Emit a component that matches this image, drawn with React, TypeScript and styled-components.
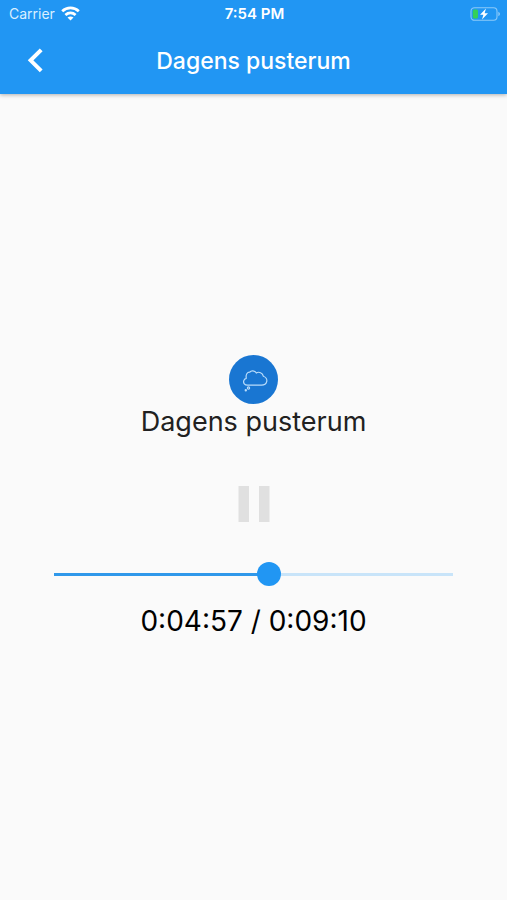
import { useState } from "react";
import type { CSSProperties } from "react";
import styled, { createGlobalStyle } from "styled-components";

const GlobalStyle = createGlobalStyle`
  * {
    box-sizing: border-box;
  }
  body {
    margin: 0;
    background: #fafafa;
    font-family: Inter, Roboto, sans-serif;
  }
`;

const Screen = styled.div`
  display: flex;
  flex-direction: column;
  min-height: 100vh;
`;

const Header = styled.header`
  background: #2196f3;
  color: #ffffff;
  box-shadow: 0 1px 4px rgba(0, 0, 0, 0.3);
`;

const StatusBar = styled.div`
  display: grid;
  grid-template-columns: 1fr auto 1fr;
  align-items: center;
  height: 27px;
  padding: 0 7px 0 9px;
  font-size: 14px;
  line-height: 20px;
`;

const Carrier = styled.div`
  display: flex;
  align-items: center;
  gap: 6px;
  color: #d9efff;
`;

const Clock = styled.div`
  font-size: 15px;
  font-weight: 600;
`;

const Battery = styled.div`
  display: flex;
  justify-content: flex-end;
`;

const AppBar = styled.div`
  display: grid;
  grid-template-columns: 72px 1fr 72px;
  align-items: center;
  height: 67px;
`;

const IconButton = styled.button<{ $size: number }>`
  display: flex;
  align-items: center;
  justify-content: center;
  width: ${({ $size }) => $size}px;
  height: ${({ $size }) => $size}px;
  padding: 0;
  border: 0;
  background: none;
  color: inherit;
  cursor: pointer;
  justify-self: center;
`;

const BarTitle = styled.h1`
  margin: 0;
  font-size: 23px;
  line-height: 32px;
  font-weight: 500;
  text-align: center;
`;

const Player = styled.main`
  flex: 1;
  display: flex;
  flex-direction: column;
  align-items: center;
  justify-content: center;
`;

const TrackTitle = styled.h2`
  margin: 0 0 32px;
  color: #212121;
  font-size: 27px;
  line-height: 36px;
  font-weight: 400;
`;

const SliderRow = styled.div`
  align-self: stretch;
  margin: 14px 0 5px;
  padding: 0 42px;
`;

const Slider = styled.input`
  appearance: none;
  display: block;
  width: 100%;
  height: 48px;
  margin: 0;
  cursor: pointer;
  background: linear-gradient(to right, #2f98ea var(--played), #c8e4f9 var(--played)) center / calc(100% - 24px) 3px
    no-repeat;

  &::-webkit-slider-thumb {
    appearance: none;
    width: 24px;
    height: 24px;
    border-radius: 50%;
    background: #2196f3;
  }
`;

const Time = styled.p`
  margin: 0;
  color: #000000;
  font-size: 28px;
  line-height: 36px;
`;

const WifiIcon = () => (
  <svg width="19" height="15" viewBox="0 0 19 15" fill="none" stroke="#ffffff" strokeWidth="2.8" aria-hidden="true">
    <path d="M1.200 5.200C6 .8 13 .8 17.800 5.200" />
    <path d="M4.400 9C7.500 6.200 11.500 6.200 14.600 9" />
    <path d="M9.500 14.600 6.500 11.600Q9.500 9.200 12.500 11.600Z" fill="#ffffff" stroke="none" />
  </svg>
);

const BatteryIcon = () => (
  <svg width="30" height="14" viewBox="0 0 30 14" aria-hidden="true">
    <rect x="1" y="0.700" width="26" height="12.600" rx="3.500" fill="none" stroke="#8ccaf9" strokeWidth="1.100" />
    <path d="M28.300 4.800Q30 5.600 30 7T28.300 9.200Z" fill="#8ccaf9" />
    <rect x="2.800" y="2.500" width="5.200" height="9" rx="1.500" fill="#34d058" />
    <path d="M16 1.400 10 7.700H13.400L12 12.600 18 6.300H14.600Z" fill="#ffffff" />
  </svg>
);

const BackIcon = () => (
  <svg width="18" height="26" viewBox="0 0 18 26" fill="none" stroke="currentColor" strokeWidth="4" aria-hidden="true">
    <path d="M14.200 1.800 3.600 12.300 14.200 22.800" />
  </svg>
);

const ThoughtLogo = () => (
  <svg width="49" height="49" viewBox="0 0 49 49" aria-hidden="true">
    <circle cx="24.500" cy="24.500" r="24.500" fill="#1976d2" />
    <g fill="none" stroke="#b9dcfa" strokeWidth="1.200" strokeLinejoin="round">
      <path d="M18.500 30.200C15.500 30 14.200 28 14.700 26C15 24.500 16 23.600 17.300 23.300C16.500 19.500 18.300 17 20.800 17.200C22 15.300 25.600 15.300 27.300 18C29.800 16.300 33.800 17.800 34.300 21.200C36.700 22 38.300 24.300 37.700 26.700C37.200 29 35 30.200 32.500 30.200Z" />
      <circle cx="19.500" cy="33" r="1.100" />
      <circle cx="16.800" cy="35.300" r="0.600" />
    </g>
  </svg>
);

const PauseIcon = () => (
  <svg width="32" height="36" viewBox="0 0 32 36" fill="#e0e0e0" aria-hidden="true">
    <rect x="0.500" width="10.500" height="36" />
    <rect x="21" width="10.500" height="36" />
  </svg>
);

const PlayIcon = () => (
  <svg width="32" height="36" viewBox="0 0 32 36" fill="#e0e0e0" aria-hidden="true">
    <path d="M3 0 31 18 3 36Z" />
  </svg>
);

const DURATION = 550;

function formatTime(total: number) {
  const minutes = String(Math.floor(total / 60)).padStart(2, "0");
  const seconds = String(total % 60).padStart(2, "0");
  return `0:${minutes}:${seconds}`;
}

export default function App() {
  const [position, setPosition] = useState(297);
  const [playing, setPlaying] = useState(true);
  const played = { "--played": `${(position / DURATION) * 100}%` } as CSSProperties;

  return (
    <>
      <GlobalStyle />
      <Screen>
        <Header>
          <StatusBar>
            <Carrier>
              Carrier
              <WifiIcon />
            </Carrier>
            <Clock>7:54 PM</Clock>
            <Battery>
              <BatteryIcon />
            </Battery>
          </StatusBar>
          <AppBar>
            <IconButton $size={48} type="button" aria-label="Tilbake">
              <BackIcon />
            </IconButton>
            <BarTitle>Dagens pusterum</BarTitle>
          </AppBar>
        </Header>
        <Player>
          <ThoughtLogo />
          <TrackTitle>Dagens pusterum</TrackTitle>
          <IconButton
            $size={64}
            type="button"
            aria-label={playing ? "Pause" : "Spill av"}
            onClick={() => setPlaying(!playing)}
          >
            {playing ? <PauseIcon /> : <PlayIcon />}
          </IconButton>
          <SliderRow>
            <Slider
              type="range"
              aria-label="Posisjon"
              min={0}
              max={DURATION}
              value={position}
              onChange={(event) => setPosition(Number(event.target.value))}
              style={played}
            />
          </SliderRow>
          <Time>
            {formatTime(position)} / {formatTime(DURATION)}
          </Time>
        </Player>
      </Screen>
    </>
  );
}
